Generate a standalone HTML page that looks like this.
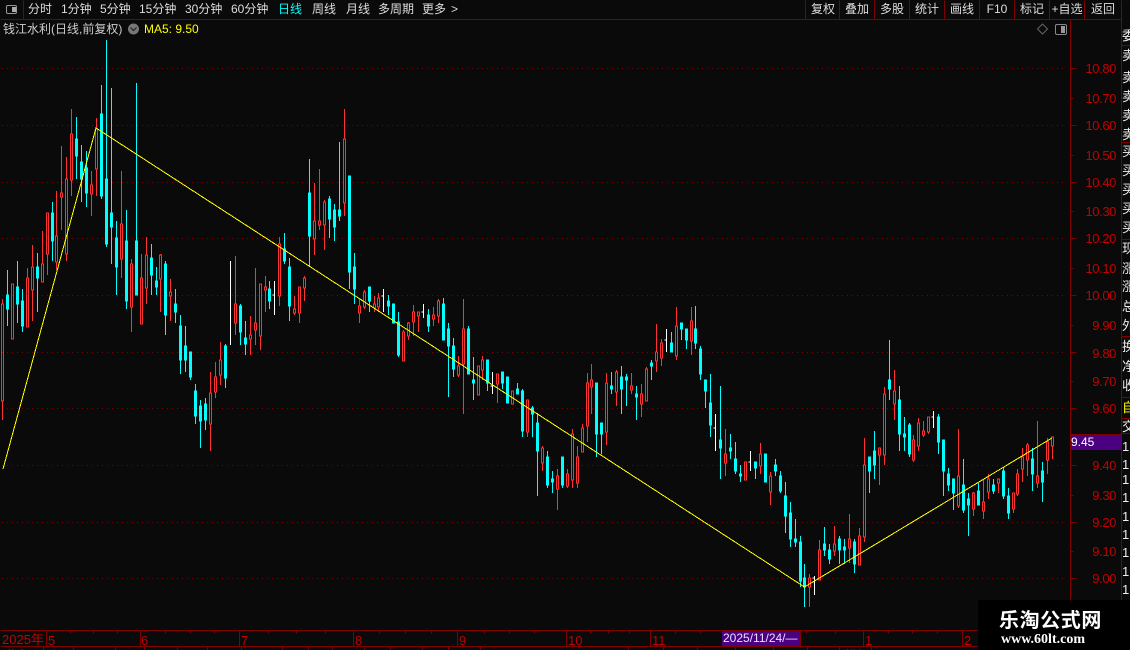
<!DOCTYPE html>
<html lang="zh"><head><meta charset="utf-8"><title>钱江水利</title>
<style>
html,body{margin:0;padding:0;background:#0a0a0a}
#p{position:relative;width:1130px;height:650px;overflow:hidden;background:#0a0a0a;font:12px/16px "Liberation Sans","WenQuanYi Zen Hei","Noto Sans CJK SC",sans-serif;color:#ddd}
#p span,#p div{position:absolute;white-space:nowrap}
svg{position:absolute;left:0;top:0}
.m{top:1px}
.b{top:1px;width:34px;text-align:center;font-size:12px}
.a{right:14px;color:#c40000;font-size:13px;letter-spacing:-.4px;text-align:right;margin-top:1px}
.t{top:633px;color:#c40000;font-size:13px}
.r{left:0;color:#eee;font-size:13px}
</style></head><body><div id="p">
<svg width="1130" height="650" shape-rendering="crispEdges" fill="none">
<g stroke="#800000" stroke-dasharray="1 4" transform="translate(0 .5)">
<path d="M2 68H1066M2 125H1066M2 182H1066M2 238H1066M2 295H1066M2 352H1066M2 408H1066M2 465H1066M2 522H1066M2 578H1066"/>
</g>
<g transform="translate(.5 0)">
<path stroke="#ff3232" d="M2 299V304M2 401V420M1 304h2v97h-2zM11 284h2v55h-2zM27 268V278M26 278h2v49h-2zM32 245V267M32 290V321M31 267h2v23h-2zM42 231V264M41 264h2v18h-2zM47 254V275M46 213h2v41h-2zM56 191V236M56 262V270M55 236h2v26h-2zM61 146V193M61 197V230M60 193h2v4h-2zM66 157V179M66 254V261M65 179h2v75h-2zM71 109V134M71 180V196M70 134h2v46h-2zM91 171V185M91 194V216M90 185h2v9h-2zM96 118V129M96 169V196M95 129h2v40h-2zM121 171V224M121 259V278M120 224h2v35h-2zM131 259V264M131 307V332M130 264h2v43h-2zM141 254V278M140 278h2v46h-2zM146 237V255M146 288V304M145 255h2v33h-2zM160 254V255M160 279V312M159 255h2v24h-2zM170 279V292M170 296V321M169 292h2v4h-2zM210 372V393M210 424V451M209 393h2v31h-2zM215 362V377M215 392V398M214 377h2v15h-2zM220 342V360M220 375V385M219 360h2v15h-2zM235 256V304M235 323V335M234 304h2v19h-2zM250 316V335M250 339V355M249 335h2v4h-2zM255 268V323M255 330V345M254 323h2v7h-2zM260 336V350M259 284h2v52h-2zM265 276V287M265 290V312M264 287h2v3h-2zM279 237V244M279 296V306M278 244h2v52h-2zM294 296V309M294 313V315M293 309h2v4h-2zM299 313V323M298 287h2v26h-2zM304 276V278M304 288V301M303 278h2v10h-2zM314 183V221M314 239V255M313 221h2v18h-2zM319 169V221M319 225V230M318 221h2v4h-2zM324 200V202M324 225V250M323 202h2v23h-2zM344 109V139M344 203V216M343 139h2v64h-2zM359 298V306M359 313V323M358 306h2v7h-2zM364 290V292M364 307V309M363 292h2v15h-2zM374 296V304M374 308V312M373 304h2v4h-2zM378 293V298M378 307V312M377 298h2v9h-2zM403 330V332M402 332h2v29h-2zM408 322V323M408 336V340M407 323h2v13h-2zM413 305V312M413 322V336M412 312h2v10h-2zM418 316V332M417 312h2v4h-2zM433 307V315M433 319V326M432 315h2v4h-2zM438 299V301M438 316V323M437 301h2v15h-2zM458 356V366M458 375V377M457 366h2v9h-2zM463 299V329M463 364V414M462 329h2v35h-2zM477 366h2v29h-2zM482 356V360M482 370V380M481 360h2v10h-2zM497 384V403M496 374h2v10h-2zM511 391h2v13h-2zM527 432V437M526 400h2v32h-2zM542 446V448M542 463V471M541 448h2v15h-2zM557 469V476M557 489V510M556 476h2v13h-2zM567 469V474M567 486V488M566 474h2v12h-2zM572 429V434M572 480V488M571 434h2v46h-2zM577 446V457M577 483V488M576 457h2v26h-2zM582 424V428M581 428h2v24h-2zM587 373V383M587 426V442M586 383h2v43h-2zM591 364V380M591 387V414M590 380h2v7h-2zM606 373V383M606 432V445M605 383h2v49h-2zM616 370V372M616 392V406M615 372h2v20h-2zM631 373V386M631 390V394M630 386h2v4h-2zM641 384V394M641 404V417M640 394h2v10h-2zM646 367V369M645 369h2v32h-2zM656 324V352M656 361V372M655 352h2v9h-2zM661 339V343M661 358V366M660 343h2v15h-2zM676 307V326M676 356V360M675 326h2v30h-2zM691 307V321M691 341V355M690 321h2v20h-2zM725 429V454M725 463V476M724 454h2v9h-2zM744 462h2v18h-2zM760 443V454M760 466V474M759 454h2v12h-2zM770 472V476M770 492V505M769 476h2v16h-2zM809 574V578M809 587V607M808 578h2v9h-2zM819 540V550M818 550h2v30h-2zM834 526V544M834 551V556M833 544h2v7h-2zM849 514V539M849 548V563M848 539h2v9h-2zM859 528V536M858 536h2v29h-2zM864 438V465M864 537V542M863 465h2v72h-2zM879 455V485M878 448h2v7h-2zM884 387V394M884 455V465M883 394h2v61h-2zM894 370V391M894 404V420M893 391h2v13h-2zM913 435V440M913 460V462M912 440h2v20h-2zM918 418V423M918 446V451M917 423h2v23h-2zM923 421V431M923 435V437M922 431h2v4h-2zM928 432V434M927 417h2v15h-2zM958 429V476M958 506V508M957 476h2v30h-2zM973 492V493M973 509V516M972 493h2v16h-2zM983 479V502M983 511V519M982 502h2v9h-2zM988 474V479M988 492V499M987 479h2v13h-2zM998 483V493M997 479h2v4h-2zM1013 509V513M1012 493h2v16h-2zM1017 469V474M1017 494V496M1016 474h2v20h-2zM1022 448V457M1022 469V482M1021 457h2v12h-2zM1027 443V445M1027 460V476M1026 445h2v15h-2zM1037 421V476M1037 483V488M1036 476h2v7h-2zM1047 438V442M1047 460V474M1046 442h2v18h-2zM1052 446V459M1051 437h2v9h-2z"/>
<path stroke="#00ffff" d="M7 270V326M6 295h2v14h-2zM17 261V323M16 287h2v17h-2zM22 289V332M21 301h2v25h-2zM37 253V312M36 267h2v11h-2zM52 202V261M51 213h2v28h-2zM76 117V179M75 139h2v17h-2zM81 145V202M80 162h2v17h-2zM86 151V207M85 168h2v25h-2zM101 85V199M100 114h2v82h-2zM106 40V247M105 179h2v65h-2zM111 88V264M110 213h2v14h-2zM116 221V295M115 238h2v29h-2zM126 210V309M125 241h2v60h-2zM136 83V295M135 241h2v54h-2zM151 244V295M150 258h2v17h-2zM156 267V295M155 281h2v6h-2zM165 261V335M164 264h2v51h-2zM175 289V323M174 304h2v8h-2zM180 315V374M179 326h2v34h-2zM185 326V372M184 346h2v14h-2zM190 352V380M189 352h2v25h-2zM195 384V424M194 391h2v25h-2zM200 400V448M199 406h2v15h-2zM205 398V430M204 404h2v16h-2zM225 344V388M224 346h2v32h-2zM240 304V345M239 306h2v26h-2zM245 321V355M244 338h2v6h-2zM269 281V309M268 289h2v12h-2zM284 233V264M283 249h2v12h-2zM289 258V321M288 267h2v39h-2zM309 159V267M308 193h2v43h-2zM329 196V238M328 199h2v20h-2zM334 204V241M333 210h2v17h-2zM339 142V221M338 210h2v6h-2zM349 176V289M348 176h2v96h-2zM354 253V304M353 267h2v22h-2zM369 287V312M368 287h2v14h-2zM388 295V315M387 301h2v5h-2zM393 304V323M392 304h2v19h-2zM398 312V357M397 322h2v33h-2zM428 309V332M427 315h2v11h-2zM443 298V340M442 304h2v36h-2zM448 323V397M447 329h2v17h-2zM453 338V377M452 346h2v23h-2zM468 326V374M467 329h2v45h-2zM473 357V400M472 380h2v3h-2zM487 360V391M486 360h2v23h-2zM502 372V389M501 372h2v11h-2zM507 377V403M506 377h2v26h-2zM517 383V394M516 389h2v5h-2zM522 389V437M521 391h2v40h-2zM532 406V437M531 408h2v6h-2zM537 413V496M536 423h2v28h-2zM547 451V488M546 457h2v28h-2zM552 471V493M551 479h2v3h-2zM562 457V488M561 457h2v28h-2zM596 383V457M595 383h2v51h-2zM601 423V454M600 423h2v11h-2zM611 372V394M610 386h2v3h-2zM621 366V414M620 377h2v12h-2zM626 374V406M625 377h2v3h-2zM636 386V420M635 394h2v3h-2zM651 360V380M650 363h2v3h-2zM671 332V352M670 343h2v9h-2zM681 323V340M680 323h2v6h-2zM686 329V349M685 329h2v11h-2zM695 306V349M694 329h2v14h-2zM700 346V380M699 349h2v25h-2zM705 380V408M704 380h2v11h-2zM710 374V437M709 403h2v22h-2zM720 386V479M719 440h2v8h-2zM730 434V459M729 448h2v3h-2zM735 442V474M734 459h2v12h-2zM740 465V482M739 474h2v2h-2zM755 462V479M754 462h2v6h-2zM765 454V482M764 454h2v28h-2zM775 459V476M774 465h2v6h-2zM780 471V493M779 476h2v15h-2zM785 482V533M784 496h2v20h-2zM790 502V547M789 513h2v26h-2zM795 519V547M794 539h2v3h-2zM800 536V587M799 542h2v39h-2zM804 564V607M803 578h2v9h-2zM824 527V556M823 544h2v6h-2zM829 544V564M828 550h2v9h-2zM839 536V564M838 539h2v11h-2zM844 539V564M843 547h2v3h-2zM854 539V573M853 542h2v22h-2zM869 457V493M868 457h2v14h-2zM874 431V479M873 451h2v14h-2zM889 340V400M888 380h2v9h-2zM899 386V451M898 400h2v34h-2zM904 417V451M903 434h2v3h-2zM909 423V457M908 425h2v29h-2zM938 414V454M937 417h2v25h-2zM943 440V496M942 440h2v31h-2zM948 468V491M947 474h2v11h-2zM953 479V510M952 479h2v14h-2zM963 459V513M962 485h2v25h-2zM968 493V536M967 499h2v6h-2zM978 483V505M977 491h2v14h-2zM993 479V494M992 485h2v6h-2zM1003 467V499M1002 471h2v25h-2zM1008 488V519M1007 496h2v17h-2zM1032 448V491M1031 459h2v15h-2zM1042 462V502M1041 471h2v11h-2z"/>
<path stroke="#ffffff" d="M230 261V345M274 281V315M272 295h2M383 289V312M381 296h2M423 304V318M421 312h2M492 372V394M490 386h2M666 329V352M664 340h2M715 414V451M713 428h2M750 451V471M748 462h2M814 576V595M812 578h2M933 411V428M931 417h2"/>
</g>
<polyline stroke="#ffff00" points="3,469 96,128 804.5,587 1052,438"/>
<g stroke="#800000" transform="translate(.5 .5)">
<path d="M0 19H1121M23 0V19M805 0V19M839 0V19M874 0V19M909 0V19M944 0V19M979 0V19M1014 0V19M1049 0V19M1084 0V19M1121 0V650M1070 19V650"/>
<path d="M0 630H1070M0 646H1130M46 630V646M140 630V646M239 630V646M353 630V646M457 630V646M566 630V646M650 630V646M800 630V646M863 630V646M962 630V646"/>
<path d="M70 630v3M93 630v3M117 630v3M165 630v3M190 630v3M214 630v3M268 630v3M296 630v3M325 630v3M379 630v3M405 630v3M431 630v3M484 630v3M509 630v3M534 630v3M590 630v3M608 630v3M629 630v3M675 630v3M700 630v3M806 630v3M835 630v3M888 630v3M912 630v3M937 630v3"/>
<path d="M43 646V650M73 646V650M115 646V650M144 646V650M177 646V650M207 646V650M241 646V650M282 646V650M308 646V650M332 646V650M364 646V650M390 646V650M422 646V650M448 646V650M480 646V650M628 646V650M663 646V650M697 646V650M735 646V650M773 646V650M807 646V650M839 646V650M871 646V650"/>
<path d="M1070 68h6M1070 125h6M1070 182h6M1070 238h6M1070 295h6M1070 352h6M1070 408h6M1070 465h6M1070 522h6M1070 578h6M1070 98h3M1070 155h3M1070 211h3M1070 268h3M1070 325h3M1070 381h3M1070 495h3M1070 551h3"/>
<path d="M1121 45H1130M1121 142H1130M1121 239H1130M1121 336H1130M1121 397H1130M1121 418H1130M1121 433H1130"/>
</g>
<rect x="6.5" y="5.5" width="10" height="8" rx="1.5" stroke="#999" shape-rendering="auto"/>
<rect x="12" y="7" width="4" height="5" fill="#aaa"/>
<rect x="1055.5" y="24.5" width="11" height="10" rx="1.5" stroke="#888" shape-rendering="auto"/>
<rect x="1061" y="26" width="4" height="7" fill="#999"/>
<path d="M1042.5 24l5 5-5 5-5-5z" stroke="#666" shape-rendering="auto"/>
<circle cx="133.5" cy="29" r="5.5" fill="#777" shape-rendering="auto"/>
<path d="M130.5 27.5l3 3 3-3" stroke="#222" stroke-width="1.2" shape-rendering="auto"/>
</svg>

<span class="m" style="left:28px">分时</span>
<span class="m" style="left:61px">1分钟</span>
<span class="m" style="left:100px">5分钟</span>
<span class="m" style="left:139px">15分钟</span>
<span class="m" style="left:185px">30分钟</span>
<span class="m" style="left:231px">60分钟</span>
<span class="m" style="left:278px;color:#00ffff">日线</span>
<span class="m" style="left:312px">周线</span>
<span class="m" style="left:346px">月线</span>
<span class="m" style="left:378px">多周期</span>
<span class="m" style="left:422px">更多</span>
<span class="m" style="left:451px">&gt;</span>

<span class="b" style="left:806px">复权</span>
<span class="b" style="left:840px">叠加</span>
<span class="b" style="left:875px">多股</span>
<span class="b" style="left:910px">统计</span>
<span class="b" style="left:945px">画线</span>
<span class="b" style="left:980px">F10</span>
<span class="b" style="left:1015px">标记</span>
<span class="b" style="left:1050px">+自选</span>
<span class="b" style="left:1086px">返回</span>

<span style="left:3px;top:21px;color:#ccc">钱江水利(日线,前复权)</span>
<span style="left:144px;top:21px;color:#ffff00">MA5: 9.50</span>

<span class="a" style="top:60px">10.80</span>
<span class="a" style="top:90px">10.70</span>
<span class="a" style="top:117px">10.60</span>
<span class="a" style="top:147px">10.50</span>
<span class="a" style="top:174px">10.40</span>
<span class="a" style="top:203px">10.30</span>
<span class="a" style="top:230px">10.20</span>
<span class="a" style="top:260px">10.10</span>
<span class="a" style="top:287px">10.00</span>
<span class="a" style="top:317px">9.90</span>
<span class="a" style="top:345px">9.80</span>
<span class="a" style="top:373px">9.70</span>
<span class="a" style="top:400px">9.60</span>
<span class="a" style="top:457px">9.40</span>
<span class="a" style="top:487px">9.30</span>
<span class="a" style="top:514px">9.20</span>
<span class="a" style="top:543px">9.10</span>
<span class="a" style="top:570px">9.00</span>

<div style="left:1071px;top:434px;width:50px;height:16px;background:#4b0082;border-top:1px solid #800000;border-bottom:1px solid #800000;box-sizing:border-box"></div>
<span style="left:1071px;top:434px;color:#fff;font-size:12px">9.45</span>

<span class="t" style="left:2px;top:632px">2025年</span>
<span class="t" style="left:48px">5</span>
<span class="t" style="left:141px">6</span>
<span class="t" style="left:241px">7</span>
<span class="t" style="left:355px">8</span>
<span class="t" style="left:459px">9</span>
<span class="t" style="left:568px">10</span>
<span class="t" style="left:652px">11</span>
<span class="t" style="left:865px">1</span>
<span class="t" style="left:964px">2</span>
<div style="left:722px;top:631px;width:78px;height:15px;background:#4b0082"></div>
<span style="left:723px;top:630px;color:#e8e0ff;font-size:12px">2025/11/24/—</span>

<div style="left:0;top:647px;width:978px;height:3px;overflow:hidden">
<span style="left:7px;top:1px;color:#eee">指标</span>
<span style="left:49px;top:1px;color:#eee">主</span>
<span style="left:828px;top:1px;color:#eee">+</span>
<span style="left:845px;top:1px;color:#00ffff">模板</span>
</div>

<div style="left:1122px;top:20px;width:8px;height:630px;overflow:hidden">
<span class="r" style="top:8px">委</span>
<span class="r" style="top:28px">卖</span><span class="r" style="top:50px">卖</span><span class="r" style="top:69px">卖</span><span class="r" style="top:88px">卖</span><span class="r" style="top:107px">卖</span>
<span class="r" style="top:124px">买</span><span class="r" style="top:143px">买</span><span class="r" style="top:162px">买</span><span class="r" style="top:181px">买</span><span class="r" style="top:200px">买</span>
<span class="r" style="top:221px">现</span><span class="r" style="top:241px">涨</span><span class="r" style="top:259px">涨</span><span class="r" style="top:279px">总</span><span class="r" style="top:298px">外</span>
<span class="r" style="top:319px">换</span><span class="r" style="top:339px">净</span><span class="r" style="top:358px">收</span>
<span class="r" style="top:380px;color:#ffff00">自</span>
<span class="r" style="top:399px">交</span>
<span class="r" style="top:419px">1</span><span class="r" style="top:437px">1</span><span class="r" style="top:452px">1</span><span class="r" style="top:470px">1</span><span class="r" style="top:489px">1</span><span class="r" style="top:507px">1</span><span class="r" style="top:525px">1</span><span class="r" style="top:544px">1</span><span class="r" style="top:562px">1</span>
</div>

<div style="left:978px;top:600px;width:152px;height:50px;background:#000"></div>
<span style="left:999px;top:607px;font:700 20px/24px 'Noto Sans CJK SC','WenQuanYi Zen Hei',sans-serif;color:#fff;letter-spacing:.6px">乐淘公式网</span>
<span style="left:1001px;top:632px;font:700 14px/16px 'Liberation Serif',serif;color:#fff">www.60lt.com</span>
</div></body></html>
